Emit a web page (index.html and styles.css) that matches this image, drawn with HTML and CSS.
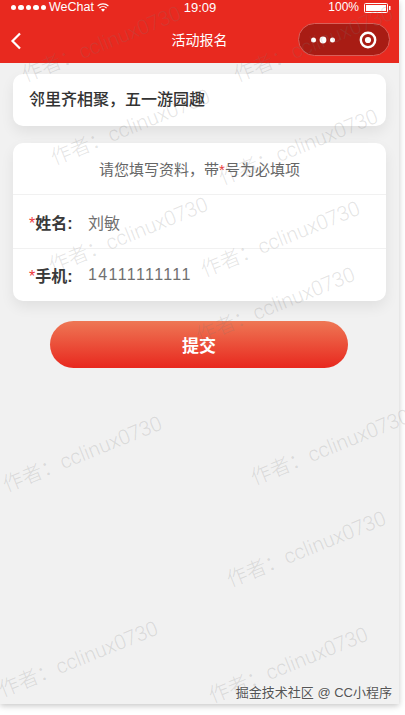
FILE: index.html
```html
<!DOCTYPE html>
<html lang="zh">
<head>
<meta charset="utf-8">
<title>活动报名</title>
<link rel="stylesheet" href="styles.css">
</head>
<body>
<div class="phone">
  <header class="head">
    <div class="status">
      <div class="status-left">
        <span class="dots"><i></i><i></i><i></i><i></i><i></i></span>
        <span class="carrier">WeChat</span>
        <svg class="wifi" width="12" height="9" viewBox="0 0 12 9"><path d="M.6 3A8 8 0 0 1 11.4 3M2.4 5A5.2 5.2 0 0 1 9.6 5" fill="none" stroke="#fff" stroke-width="1.1"/><path d="M4 6.6a3 3 0 0 1 4 0L6 8.8z" fill="#fff"/></svg>
      </div>
      <div class="status-time">19:09</div>
      <div class="status-right">
        <span>100%</span>
        <svg width="27" height="10" viewBox="0 0 27 10"><rect x=".5" y=".5" width="23" height="9" rx="1" fill="none" stroke="#fff"/><rect x="2" y="2" width="20" height="6" fill="#fff"/><rect x="25" y="3" width="1.5" height="4" fill="#fff"/></svg>
      </div>
    </div>
    <nav class="nav">
      <svg class="back" width="12" height="18" viewBox="0 0 12 18"><path d="M10 1.5 2.5 9l7.5 7.5" fill="none" stroke="#fff" stroke-width="2.2"/></svg>
      <div class="nav-title">活动报名</div>
      <div class="capsule">
        <svg width="27" height="8" viewBox="0 0 27 8"><circle cx="3.5" cy="4" r="2.5" fill="#fff"/><circle cx="13" cy="4" r="3.4" fill="#fff"/><circle cx="22.5" cy="4" r="2.5" fill="#fff"/></svg>
        <svg width="18" height="18" viewBox="0 0 18 18"><circle cx="9" cy="9" r="7.2" fill="none" stroke="#fff" stroke-width="2.4"/><circle cx="9" cy="9" r="3.1" fill="#fff"/></svg>
      </div>
    </nav>
  </header>
  <main class="content">
    <section class="card title-card">邻里齐相聚，五一游园趣</section>
    <section class="card form-card">
      <div class="hint">请您填写资料，带<em>*</em>号为必填项</div>
      <div class="row"><label class="label"><em>*</em>姓名:</label><span class="value">刘敏</span></div>
      <div class="row"><label class="label"><em>*</em>手机:</label><span class="value phone-no">14111111111</span></div>
    </section>
    <button class="submit">提交</button>
  </main>
</div>
<div class="wm wm1">作者：cclinux0730</div>
<div class="wm wm2">作者：cclinux0730</div>
<div class="wm wm3">作者：cclinux0730</div>
<div class="wm wm4">作者：cclinux0730</div>
<div class="wm wm5">作者：cclinux0730</div>
<div class="wm wm6">作者：cclinux0730</div>
<div class="wm wm7">作者：cclinux0730</div>
<div class="wm wm8">作者：cclinux0730</div>
<div class="wm wm9">作者：cclinux0730</div>
<div class="wm wm10">作者：cclinux0730</div>
<div class="wm wm11">作者：cclinux0730</div>
<div class="wm wm12">作者：cclinux0730</div>
<div class="credit">掘金技术社区 @ CC小程序</div>
</body>
</html>
```
FILE: styles.css
```css
* { box-sizing: border-box; }
html { overflow: hidden; }
html, body { margin: 0; padding: 0; }
body {
  position: relative;
  width: 405px;
  height: 715px;
  overflow: hidden;
  background: #fff;
  font-family: "Liberation Sans", "Noto Sans CJK SC", sans-serif;
}
.phone {
  width: 399px;
  height: 704px;
  background: #f1f1f1;
  box-shadow: 0 2px 6px rgba(0,0,0,.22);
}
.head { height: 63px; background: #e8291f; color: #fff; }
.status {
  height: 15px;
  display: grid;
  grid-template-columns: 1fr auto 1fr;
  align-items: center;
  padding: 0 8px 0 11px;
  font-size: 12px;
  line-height: 15px;
}
.status-left { display: flex; align-items: center; gap: 3px; }
.dots { display: flex; gap: 2px; }
.dots i { width: 5.4px; height: 5.4px; border-radius: 50%; background: #fff; }
.carrier { font-size: 12.5px; }
.status-time { font-size: 13px; position: relative; left: -1px; }
.status-right { display: flex; justify-content: flex-end; align-items: center; gap: 5px; }
.nav {
  position: relative;
  height: 48px;
  display: flex;
  align-items: center;
  justify-content: space-between;
  padding: 0 9px 0 10px;
}
.nav-title {
  position: absolute;
  left: 0;
  right: 0;
  text-align: center;
  font-size: 14px;
}
.back { position: relative; top: 2px; }
.capsule {
  width: 92px;
  height: 33px;
  margin-top: 1px;
  border-radius: 17px;
  background: #a81c14;
  border: 1px solid #d9605a;
  display: flex;
  align-items: center;
  justify-content: space-between;
  padding: 0 12px 0 11px;
}
.content { display: flex; flex-direction: column; padding: 11px 13px 0; }
.card {
  background: #fff;
  border-radius: 10px;
  box-shadow: 0 6px 14px rgba(0,0,0,.07);
}
.title-card {
  height: 52px;
  line-height: 52px;
  padding-left: 16px;
  font-size: 16px;
  font-weight: 500;
  color: #333;
}
.form-card { margin-top: 17px; height: 158px; }
.hint {
  height: 52px;
  line-height: 54px;
  text-align: center;
  font-size: 15px;
  color: #666;
  border-bottom: 1px solid #f1f1f1;
}
em { font-style: normal; color: #ee3a3a; }
.row {
  height: 53px;
  display: flex;
  align-items: center;
  padding-left: 16px;
  font-size: 16px;
}
.row + .row { border-top: 1px solid #f1f1f1; }
.label { width: 59px; font-weight: 700; color: #3a3a3a; }
.label em { font-weight: 400; }
.value { color: #707070; }
.phone-no { letter-spacing: 1.4px; }
.submit {
  align-self: center;
  width: 298px;
  height: 47px;
  margin: 20px 0 0 -1px;
  border: 0;
  border-radius: 24px;
  background: linear-gradient(#ee7755, #e8281e);
  color: #fff;
  font: 700 17px "Liberation Sans", "Noto Sans CJK SC", sans-serif;
}
.wm {
  position: absolute;
  transform-origin: 0 100%;
  transform: rotate(-22deg);
  white-space: nowrap;
  font-family: Roboto, "Noto Sans CJK SC", sans-serif;
  font-weight: 300;
  font-size: 20.5px;
  line-height: 24px;
  color: rgba(120,120,120,.2);
  pointer-events: none;
}
.wm1 { left: 27px; top: 63px; }
.wm2 { left: 239px; top: 63px; }
.wm3 { left: 56px; top: 146px; }
.wm4 { left: 224px; top: 166px; }
.wm5 { left: 54px; top: 254px; }
.wm6 { left: 206px; top: 258px; }
.wm7 { left: 201px; top: 324px; }
.wm8 { left: 8px; top: 473px; }
.wm9 { left: 256px; top: 466px; }
.wm10 { left: 232px; top: 568px; }
.wm11 { left: 4px; top: 678px; }
.wm12 { left: 214px; top: 684px; }
.credit {
  position: absolute;
  right: 13px;
  top: 685px;
  font-size: 13px;
  line-height: 16px;
  color: #555;
  text-shadow: 0 0 2px #fff;
}
```
